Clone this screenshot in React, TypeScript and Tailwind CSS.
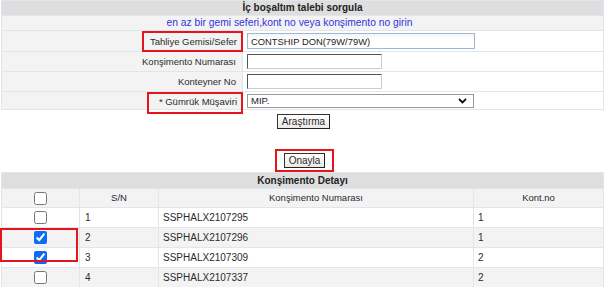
import { useState } from 'react';

const rows = [
  { sn: 1, no: 'SSPHALX2107295', kont: 1, checked: false },
  { sn: 2, no: 'SSPHALX2107296', kont: 1, checked: true },
  { sn: 3, no: 'SSPHALX2107309', kont: 2, checked: true },
  { sn: 4, no: 'SSPHALX2107337', kont: 2, checked: false },
];

const cellBorder = 'border border-[#dfe6ee]';

export default function App() {
  const [items, setItems] = useState(rows);

  const toggle = (sn: number) =>
    setItems((prev) => prev.map((r) => (r.sn === sn ? { ...r, checked: !r.checked } : r)));

  return (
    <div className="w-[605px] h-[287px] overflow-hidden bg-white text-[#2b2b2b] text-[10px] leading-[12px] font-['Liberation_Sans',Arial,sans-serif]">
      {/* search form */}
      <table className="ml-[1px] w-[603px] border-collapse">
        <tbody>
          <tr className="h-[15px] bg-[#dedede]">
            <td colSpan={2} className={`${cellBorder} text-center font-bold text-[10px] text-[#222]`}>
              İç boşaltım talebi sorgula
            </td>
          </tr>
          <tr className="h-[15px] bg-[#f3f3f3]">
            <td colSpan={2} className={`${cellBorder} text-center text-[10.3px] text-[#3434e0] pr-[26px]`}>
              en az bir gemi seferi,kont no veya konşimento no girin
            </td>
          </tr>
          <tr className="h-[21px]">
            <td className={`${cellBorder} w-[241px] bg-[#f3f3f3] text-right p-0 text-[9.5px]`}>
              <span className="inline-block border-2 border-[#e8141c] h-[21px] leading-[17px] -my-[3px] pl-[6px] pr-[4px] -mr-[1px] align-middle">
                Tahliye Gemisi/Sefer
              </span>
            </td>
            <td className={`${cellBorder} px-[4px] py-0`}>
              <input
                defaultValue="CONTSHIP DON(79W/79W)"
                className="block w-[228px] h-[16px] border border-[#9fb7d0] px-[3px] text-[9.4px] text-[#222] font-['Liberation_Sans',Arial,sans-serif] bg-[linear-gradient(#f4f4f4,#fff_40%)]"
              />
            </td>
          </tr>
          <tr className="h-[20px]">
            <td className={`${cellBorder} bg-[#f3f3f3] text-right pr-[6px] text-[9.5px]`}>Konşimento Numarası</td>
            <td className={`${cellBorder} px-[4px] py-0`}>
              <input className="block w-[135px] h-[15px] border border-[#555] border-b-[#ccc] border-r-[#ccc] bg-white" />
            </td>
          </tr>
          <tr className="h-[20px]">
            <td className={`${cellBorder} bg-[#f3f3f3] text-right pr-[6px] text-[9.5px]`}>Konteyner No</td>
            <td className={`${cellBorder} px-[4px] py-0`}>
              <input className="block w-[135px] h-[15px] border border-[#555] border-b-[#ccc] border-r-[#ccc] bg-white" />
            </td>
          </tr>
          <tr className="h-[18px]">
            <td className={`${cellBorder} bg-[#f3f3f3] text-right p-0 align-top text-[9.5px]`}>
              <span className="inline-block border-2 border-[#e8141c] h-[22px] leading-[15px] -mb-[8px] pl-[10px] pr-[4px] -mr-[1px] align-top">
                * Gümrük Müşaviri
              </span>
            </td>
            <td className={`${cellBorder} px-[4px] py-0`}>
              <div className="flex items-center justify-between w-[227px] h-[14px] border border-[#999] bg-white pl-[3px] pr-[6px] text-[9.5px] text-[#222]">
                <span>MIP.</span>
                <svg width="9" height="6" viewBox="0 0 9 6">
                  <path d="M1 1l3.5 3.5L8 1" fill="none" stroke="#111" strokeWidth="1.8" />
                </svg>
              </div>
            </td>
          </tr>
        </tbody>
      </table>

      <div className="flex justify-center pt-[4px] pl-[2px]">
        <button className="h-[15px] px-[4px] border border-[#333] border-b-[#222] border-r-[#222] bg-[linear-gradient(#fff,#e9e9e9)] text-[10px] leading-[12px]">
          Araştırma
        </button>
      </div>

      <div className="flex justify-center mt-[20px] pl-[4px]">
        <div className="border-2 border-[#e8141c] px-[7px] pt-[2px] pb-[2px]">
          <button className="block h-[15px] px-[4px] border border-[#333] border-b-[#222] border-r-[#222] bg-[linear-gradient(#fff,#e9e9e9)] text-[10px] leading-[12px]">
            Onayla
          </button>
        </div>
      </div>

      {/* detail table */}
      <div className="relative">
        <table className="ml-[1px] w-[603px] border-collapse">
          <tbody>
            <tr className="h-[16px] bg-[#dedede]">
              <td colSpan={4} className={`${cellBorder} text-center font-bold text-[10px] text-[#222]`}>
                Konşimento Detayı
              </td>
            </tr>
            <tr className="h-[19px] bg-[#f3f3f3] text-[9.5px]">
              <td className={`${cellBorder} w-[78px] text-center`}>
                <input type="checkbox" className="block mx-auto w-[13px] h-[13px]" />
              </td>
              <td className={`${cellBorder} w-[79px] text-center`}>S/N</td>
              <td className={`${cellBorder} w-[315px] text-center`}>Konşimento Numarası</td>
              <td className={`${cellBorder} text-center`}>Kont.no</td>
            </tr>
            {items.map((r, i) => (
              <tr key={r.sn} className={i % 2 === 0 ? 'h-[20px] bg-white' : 'h-[20px] bg-[#f3f3f3]'}>
                <td className={`${cellBorder} text-center`}>
                  <input
                    type="checkbox"
                    checked={r.checked}
                    onChange={() => toggle(r.sn)}
                    className="block mx-auto w-[13px] h-[13px] accent-[#0b6cf5]"
                  />
                </td>
                <td className={`${cellBorder} pl-[5px]`}>{r.sn}</td>
                <td className={`${cellBorder} pl-[4px]`}>{r.no}</td>
                <td className={`${cellBorder} pl-[4px]`}>{r.kont}</td>
              </tr>
            ))}
          </tbody>
        </table>
        <div className="absolute left-0 top-[56px] w-[78px] h-[34px] border-2 border-[#e8141c] pointer-events-none" />
      </div>
    </div>
  );
}
